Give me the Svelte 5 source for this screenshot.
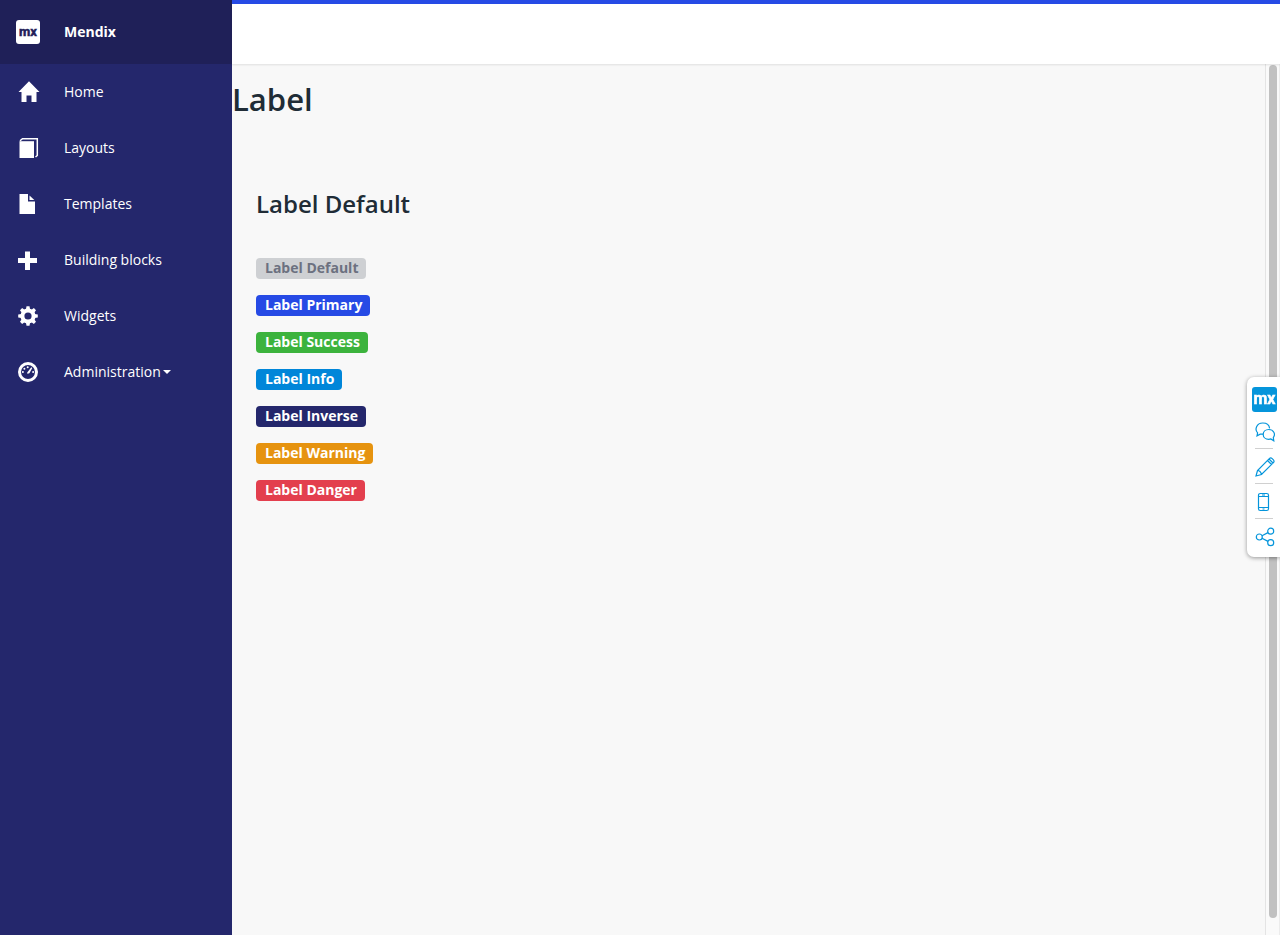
<script>
  const nav = [
    { name: 'Home', icon: 'home' },
    { name: 'Layouts', icon: 'book' },
    { name: 'Templates', icon: 'file' },
    { name: 'Building blocks', icon: 'plus' },
    { name: 'Widgets', icon: 'cog' },
    { name: 'Administration', icon: 'dashboard', menu: true }
  ];
  const labels = ['Default', 'Primary', 'Success', 'Info', 'Inverse', 'Warning', 'Danger'];
  const teeth = [0, 45, 90, 135, 180, 225, 270, 315];
</script>

<div class="page">
  <aside>
    <a class="brand" href="#home">
      <svg class="logo" viewBox="0 0 24 24" aria-hidden="true">
        <rect width="24" height="24" rx="3" fill="#fff" />
        <text x="12" y="16" text-anchor="middle" fill="#1f2058" stroke="#1f2058">mx</text>
      </svg>
      <span>Mendix</span>
    </a>
    <nav>
      {#each nav as item}
        <a href="#{item.icon}">
          <svg class="icon" viewBox="0 0 24 24" fill="#fff" aria-hidden="true">
            {#if item.icon === 'home'}
              <path d="M13 1.200 23.500 12H20.500V22H15.500V15.500H10.500V22H5.500V12H2.500Z" />
            {:else if item.icon === 'book'}
              <path d="M3.500 5.200H18V22H3.500Z" />
              <path d="M4 4.800 6.500 2.700H21.300V19.500L19.500 21" fill="none" stroke="#fff" stroke-width="1.500" />
            {:else if item.icon === 'file'}
              <path d="M3.500 2H12V9.500H19V22H3.500Z" />
              <path d="M13.500 3.500V8H18.300Z" />
            {:else if item.icon === 'plus'}
              <path d="M9 3.500H14V10H21V15H14V22H9V15H2V10H9Z" />
            {:else if item.icon === 'cog'}
              <circle cx="12" cy="12" r="5.600" fill="none" stroke="#fff" stroke-width="4" />
              {#each teeth as angle}
                <path d="M9.900 5.500 10.500 2.200H13.500L14.100 5.500Z" transform="rotate({angle} 12 12)" />
              {/each}
            {:else}
              <circle cx="12" cy="12" r="8.500" fill="none" stroke="#fff" stroke-width="3" />
              <circle cx="6.900" cy="12" r="1" />
              <circle cx="8.400" cy="8.700" r="1" />
              <circle cx="11.700" cy="7.200" r="1" />
              <circle cx="17.100" cy="12" r="1" />
              <path d="M15.300 7.300 16.300 8 13.400 13.200 11.600 13.800 11 12.900 12 11.600Z" />
            {/if}
          </svg>
          <span>{item.name}</span>
          {#if item.menu}<i class="caret"></i>{/if}
        </a>
      {/each}
    </nav>
  </aside>

  <div class="body">
    <header></header>
    <div class="scroller">
      <main>
        <h1>Label</h1>
        <section>
          <h2>Label Default</h2>
          <div class="labels">
            {#each labels as label}
              <span class="label {label.toLowerCase()}">Label {label}</span>
            {/each}
          </div>
        </section>
      </main>
      <div class="track"><div class="thumb"></div></div>
    </div>
  </div>

  <div class="tools">
    <button class="mx" aria-label="Mendix">
      <svg class="logo big" viewBox="0 0 25 25" aria-hidden="true">
        <rect width="25" height="25" rx="3" fill="#0595db" />
        <text x="12.500" y="17" text-anchor="middle" fill="#fff" stroke="#fff">mx</text>
      </svg>
    </button>
    <button aria-label="Feedback">
      <svg viewBox="0 0 20 20">
        <path d="M8.200 12.100 5.200 12.200 2 13.800 2.600 10.900C-.6 7.600 1.400 1 7.800 1c4 0 6.500 2.300 6.800 5.400" />
        <path d="M13.800 7.500c-3.300 0-5.600 2.100-5.600 4.900s2.300 4.900 5.600 4.900l2-.3 3 1.800-.5-3.200c2.700-3.600.2-8.100-4.500-8.100Z" />
      </svg>
    </button>
    <button aria-label="Edit">
      <svg viewBox="0 0 20 20">
        <path d="M1 19 2.500 13.500 14.300 1.600Q15.700.3 17.200 1.600L18.400 2.800Q19.700 4.200 18.400 5.600L6.500 17.500ZM2.500 13.500 Q5.500 13.500 6.500 17.500M12.500 3.500 16.500 7.500M14 2 18 6" />
      </svg>
    </button>
    <button aria-label="Mobile view">
      <svg viewBox="0 0 20 20">
        <rect x="3.500" y="1.500" width="10" height="17" rx="1.800" />
        <path d="M3.500 4.500h10M3.500 15.500h10M7 3h3M7.500 17h2" />
      </svg>
    </button>
    <button aria-label="Share">
      <svg viewBox="0 0 20 20">
        <circle cx="4.300" cy="10" r="3" />
        <circle cx="15.700" cy="4.200" r="3" />
        <circle cx="15.700" cy="15.700" r="3" />
        <path d="M7 8.700 13 5.600M7 11.300 13 14.400" />
      </svg>
    </button>
  </div>
</div>

<style>
  :global(body) {
    margin: 0;
    font-family: 'Open Sans', sans-serif;
    font-size: 14px;
    color: #202c36;
    background: #f8f8f8;
  }
  .page {
    display: flex;
    min-height: 100vh;
  }
  aside {
    width: 232px;
    flex: none;
    background: #24276c;
  }
  aside a {
    display: flex;
    align-items: center;
    height: 56px;
    padding: 0 16px;
    color: #fff;
    text-decoration: none;
  }
  aside .brand {
    height: 64px;
    background: #1f2058;
    font-weight: 700;
  }
  aside svg {
    flex: none;
    width: 24px;
    height: 24px;
    margin-right: 24px;
  }
  aside span {
    padding-bottom: 2px;
  }
  .logo text {
    font-family: Roboto, sans-serif;
    font-size: 13px;
    font-weight: 700;
    stroke-width: 0.5px;
  }
  .caret {
    margin-left: 2px;
    border: 4px solid transparent;
    border-top-color: #fff;
    border-bottom: 0;
  }
  .body {
    flex: 1;
    display: flex;
    flex-direction: column;
  }
  header {
    height: 60px;
    border-top: 4px solid #264ae5;
    background: #fff;
    box-shadow: 0 1px 2px rgba(0, 0, 0, 0.1);
    z-index: 1;
  }
  .scroller {
    flex: 1;
    display: flex;
  }
  main {
    flex: 1;
  }
  h1,
  h2 {
    margin: 0;
    font-weight: 600;
  }
  h1 {
    padding-top: 13px;
    font-size: 31px;
    line-height: 44px;
  }
  section {
    padding: 66px 24px 24px;
  }
  h2 {
    font-size: 24px;
    line-height: 34px;
  }
  .labels {
    display: flex;
    flex-direction: column;
    align-items: flex-start;
    gap: 16px;
    padding-top: 37px;
  }
  .label {
    padding: 0 8px 2px 9px;
    border-radius: 4px;
    color: #fff;
    font-weight: 700;
    line-height: 19px;
  }
  .default { background: #ced0d3; color: #6c7180; }
  .primary { background: #264ae5; }
  .success { background: #3cb33d; }
  .info { background: #0086d9; }
  .inverse { background: #24276c; }
  .warning { background: #e6930f; }
  .danger { background: #e33f4e; }
  .track {
    box-sizing: border-box;
    display: flex;
    width: 15px;
    padding: 1px 2px 17px 3px;
    background: #fafafa;
    border-left: 1px solid #e4e4e4;
    border-right: 1px solid #ececec;
  }
  .thumb {
    flex: 1;
    border-radius: 4px;
    background: #c1c1c1;
  }
  .tools {
    position: fixed;
    top: 377px;
    right: 0;
    z-index: 2;
    display: flex;
    flex-direction: column;
    box-sizing: border-box;
    width: 33px;
    padding: 10px 0 4px;
    border-radius: 7px 0 0 7px;
    background: #fff;
    box-shadow: 0 1px 4px rgba(0, 0, 0, 0.4);
  }
  .tools button {
    display: flex;
    align-items: center;
    box-sizing: border-box;
    height: 35px;
    margin: 0 7px 0 8px;
    padding: 2px 0 0;
    border: 0;
    border-top: 1px solid #d0d0d0;
    background: none;
  }
  .tools .mx {
    height: 26px;
    margin: 0 0 0 5px;
    padding: 0 0 1px;
    border: 0;
  }
  .tools .mx + button {
    border-top-color: transparent;
  }
  .tools svg {
    flex: none;
    width: 20px;
    height: 20px;
    fill: none;
    stroke: #0595db;
    stroke-width: 1.2px;
  }
  .tools .big {
    width: 25px;
    height: 25px;
    stroke: none;
  }
  .tools .big text {
    font-size: 16px;
  }
</style>
